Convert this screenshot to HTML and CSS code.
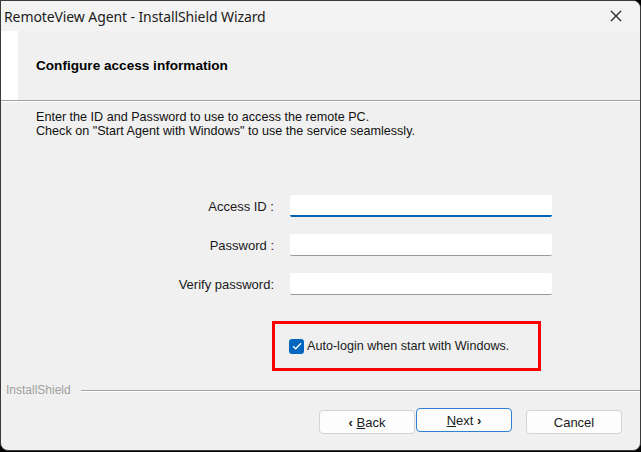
FILE: index.html
```html
<!DOCTYPE html>
<html>
<head>
<meta charset="utf-8">
<link rel="stylesheet" href="styles.css">
</head>
<body>
<div class="window">
  <div class="titlebar">
    <span class="title">RemoteView Agent - InstallShield Wizard</span>
    <span class="close"><svg width="12" height="12" viewBox="0 0 12 12"><path d="M1 1L11 11M11 1L1 11" stroke="#222" stroke-width="1.2" fill="none"/></svg></span>
  </div>
  <div class="header">
    <div class="strip"></div>
    <div class="heading">Configure access information</div>
  </div>
  <div class="content">
    <p class="intro">Enter the ID and Password to use to access the remote PC.<br>Check on "Start Agent with Windows" to use the service seamlessly.</p>
    <div class="form">
      <label class="label">Access ID :</label>
      <div class="input focused"></div>
      <label class="label">Password :</label>
      <div class="input"></div>
      <label class="label">Verify password:</label>
      <div class="input"></div>
    </div>
    <div class="highlight">
      <span class="checkbox"><svg width="10" height="8" viewBox="0 0 10 8"><path d="M1 4.2L3.7 6.8L9 1.2" stroke="#fff" stroke-width="1.3" fill="none"/></svg></span>
      <span class="check-label">Auto-login when start with Windows.</span>
    </div>
  </div>
  <div class="footer">
    <div class="brand"><span class="brand-text">InstallShield</span><span class="rule"></span></div>
    <div class="buttons">
      <button class="btn back"><span class="chev">&lsaquo;</span> <u>B</u>ack</button>
      <button class="btn next"><u>N</u>ext <span class="chev">&rsaquo;</span></button>
      <button class="btn cancel">Cancel</button>
    </div>
  </div>
</div>
</body>
</html>
```

FILE: styles.css
```css
html, body {
  margin: 0;
  padding: 0;
  background: #000;
}
body {
  width: 641px;
  height: 452px;
  overflow: hidden;
}
.window {
  box-sizing: border-box;
  width: 641px;
  height: 451px;
  border: 1px solid #3a3a3a;
  border-radius: 0 8px 8px 8px;
  background: #f0f0f0;
  overflow: hidden;
  display: flex;
  flex-direction: column;
}
.titlebar {
  height: 30px;
  background: #f3f3f3;
  display: flex;
  align-items: center;
  justify-content: space-between;
  padding-left: 3px;
}
.title {
  font-family: "Noto Sans", sans-serif;
  font-size: 14px;
  color: #1b1b1b;
  letter-spacing: -0.1px;
}
.close {
  width: 46px;
  height: 30px;
  display: flex;
  align-items: center;
  justify-content: center;
  margin-right: 1px;
}
.header {
  height: 69px;
  display: flex;
  align-items: center;
  background: #f0f0f0;
  border-bottom: 1px solid #a0a0a0;
  box-shadow: 0 1px 0 #ffffff;
}
.strip {
  align-self: stretch;
  width: 17px;
  background: #ffffff;
}
.heading {
  margin-left: 18px;
  font-family: "Liberation Sans", Arial, sans-serif;
  font-weight: bold;
  font-size: 13.6px;
  color: #000;
}
.content {
  flex: 1;
  font-family: "Liberation Sans", Arial, sans-serif;
  color: #000;
}
.intro {
  margin: 9px 0 0 35px;
  font-size: 12.6px;
  line-height: 14px;
  color: #111;
}
.form {
  margin: 57px 0 0 150px;
  display: grid;
  grid-template-columns: 123px 262px;
  column-gap: 16px;
  row-gap: 17px;
  align-items: center;
}
.label {
  font-size: 13px;
  color: #1a1a1a;
  text-align: right;
}
.input {
  box-sizing: border-box;
  height: 22px;
  background: #fff;
  border-radius: 2px;
  border-bottom: 1px solid #9a9a9a;
}
.input.focused {
  border-bottom: 2px solid #0063b1;
}
.highlight {
  box-sizing: border-box;
  margin: 26px 0 0 271px;
  width: 269px;
  height: 50px;
  border: 3px solid #ff0000;
  display: flex;
  align-items: center;
  padding-left: 14px;
}
.checkbox {
  width: 15px;
  height: 15px;
  border-radius: 3px;
  background: #0067c0;
  display: flex;
  align-items: center;
  justify-content: center;
}
.check-label {
  margin-left: 3px;
  font-size: 12.6px;
  color: #1a1a1a;
}
.footer {
  height: 70px;
  padding-top: 3px;
  box-sizing: border-box;
  font-family: "Liberation Sans", Arial, sans-serif;
}
.brand {
  display: flex;
  align-items: center;
  padding-left: 5px;
  height: 14px;
}
.brand-text {
  font-size: 12px;
  color: #a0a0a0;
}
.rule {
  flex: 1;
  margin-left: 10px;
  height: 1px;
  background: #a0a0a0;
  box-shadow: 0 1px 0 #fff;
}
.buttons {
  display: flex;
  justify-content: flex-end;
  align-items: flex-start;
  padding: 11px 18px 0 0;
}
.btn {
  box-sizing: border-box;
  width: 96px;
  height: 24px;
  margin: 2px 0 0 0;
  padding: 0;
  font-family: "Liberation Sans", Arial, sans-serif;
  font-size: 13px;
  color: #1a1a1a;
  background: #fdfdfd;
  border: 1px solid #d3d3d3;
  border-radius: 4px;
}
.btn.next {
  margin: 0 0 0 1px;
  border: 1px solid #2f7fd1;
}
.btn.cancel {
  margin-left: 14px;
}
.chev {
  font-weight: bold;
}
```
